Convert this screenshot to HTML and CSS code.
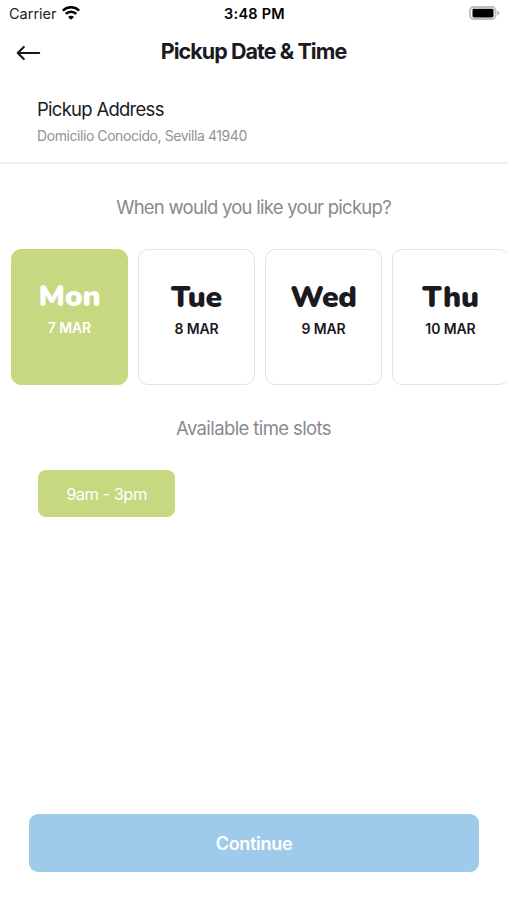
FILE: index.html
```html
<!DOCTYPE html>
<html lang="en">
<head>
<meta charset="utf-8">
<title>Pickup Date &amp; Time</title>
<link rel="stylesheet" href="styles.css">
</head>
<body>
<div class="screen">
  <div class="status">
    <div class="carrier"><span class="carrier-name">Carrier</span>
      <svg class="wifi" viewBox="0 0 18 14" width="18" height="14"><path d="M.8 4.600a11.600 11.600 0 0 1 16.400 0M3.700 7.900a7.500 7.500 0 0 1 10.600 0" fill="none" stroke="#000" stroke-width="2.500"/><path d="M9 13.700 6 10.900a4.200 4.200 0 0 1 6 0z"/></svg>
    </div>
    <span class="clock">3:48 PM</span>
    <svg class="battery" viewBox="0 0 31 14" width="31" height="14"><rect x="1" y="1" width="25.500" height="12" rx="3.500" fill="none" stroke="#bdbdbd" stroke-width="1.800"/><rect x="3.500" y="2.800" width="21" height="8.600" rx="1.300"/><path d="M28 4.500v5q2.500-1 2.500-2.500t-2.500-2.500" fill="#bdbdbd"/></svg>
  </div>
  <header class="header">
    <svg class="back" viewBox="0 0 26 18" width="26" height="18"><path d="M23.200 9H2M7.800 2.900 1.700 9l6.100 6.100" fill="none" stroke="#16161d" stroke-width="2.100" stroke-linecap="round" stroke-linejoin="round"/></svg>
    <h1>Pickup Date &amp; Time</h1>
  </header>
  <section class="address">
    <h2>Pickup Address</h2>
    <p>Domicilio Conocido, Sevilla 41940</p>
  </section>
  <p class="prompt">When would you like your pickup?</p>
  <div class="days">
    <div class="day selected"><strong>Mon</strong><span>7 MAR</span></div>
    <div class="day"><strong>Tue</strong><span>8 MAR</span></div>
    <div class="day"><strong>Wed</strong><span>9 MAR</span></div>
    <div class="day"><strong>Thu</strong><span>10 MAR</span></div>
  </div>
  <p class="prompt slots-title">Available time slots</p>
  <div class="slots"><div class="slot">9am - 3pm</div></div>
  <button class="continue">Continue</button>
</div>
</body>
</html>
```
FILE: styles.css
```css
* { box-sizing: border-box; }
body { margin: 0; background: #fff; color: #1a1a1f; font-family: Inter, sans-serif; }
h1, h2, p { margin: 0; font-weight: 400; white-space: nowrap; }
span, strong { white-space: nowrap; }
.screen { width: 507px; height: 900px; overflow: hidden; display: flex; flex-direction: column; }
.status { height: 27px; display: grid; grid-template-columns: 1fr auto 1fr; align-items: center; padding: 0 7px 0 9px; color: #000; }
.carrier { display: flex; align-items: center; gap: 5px; font-size: 14.5px; color: #222; }
.wifi { margin-bottom: 1px; }
.clock { font-size: 14.5px; font-weight: 600; letter-spacing: 0.25px; }
.battery { justify-self: end; margin-bottom: 1px; }
.header { height: 59px; display: grid; grid-template-columns: 26px 1fr 26px; padding: 1px 16px 0; align-items: start; }
.back { margin-top: 16px; }
.header h1 { font-size: 21.5px; font-weight: 650; letter-spacing: -0.95px; line-height: 47px; text-align: center; }
.address { height: 78px; padding: 11px 38px 0 37px; border-bottom: 2px solid #ededef; }
.address h2 { font-size: 18.5px; line-height: 24px; letter-spacing: -0.73px; }
.address p { margin-top: 5px; font-size: 14px; line-height: 20px; letter-spacing: -0.43px; color: #929298; }
.prompt { margin-top: 30px; height: 26px; line-height: 26px; text-align: center; font-size: 18.5px; letter-spacing: -0.74px; color: #89898f; }
.days { display: flex; gap: 10px; padding-left: 11px; margin-top: 29px; }
.day { flex: 0 0 117px; height: 136px; padding-top: 29px; border: 1.5px solid #e3e3e6; border-radius: 10px; display: flex; flex-direction: column; align-items: center; }
.day strong { font-family: "Nunito", Inter, sans-serif; font-size: 30px; font-weight: 900; line-height: 38px; letter-spacing: -0.2px; }
.day span { font-size: 14px; font-weight: 600; line-height: 20px; margin-top: 2px; letter-spacing: -0.1px; }
.selected { color: #fff; background: #c6d880; border-color: #c6d880; padding-top: 28px; }
.slots-title { letter-spacing: -0.6px; }
.slots { padding: 29px 38px 0; display: flex; }
.slot { width: 137px; height: 47px; line-height: 48px; border-radius: 8px; background: #c6d880; color: #fff; text-align: center; font-size: 16.5px; letter-spacing: -0.55px; }
.continue { margin: auto 28px 28px 29px; padding: 0; height: 58px; flex: none; border: 0; border-radius: 9px; background: #9fcbea; color: #fff; font: 600 18px Inter, sans-serif; letter-spacing: -0.3px; }
```
